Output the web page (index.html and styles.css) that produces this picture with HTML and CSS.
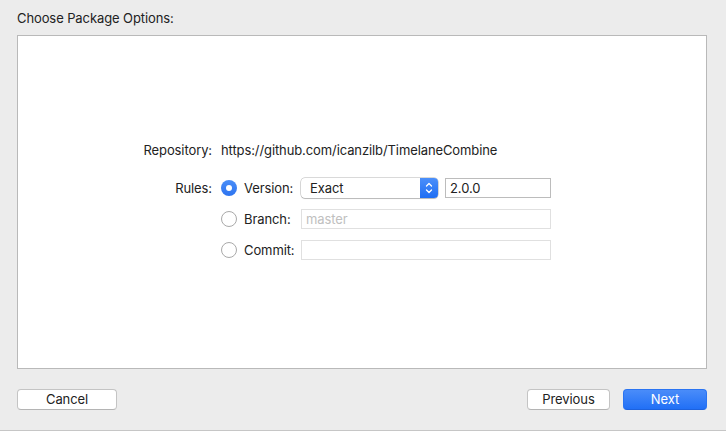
FILE: index.html
```html
<!DOCTYPE html>
<html>
<head>
<meta charset="utf-8">
<link rel="stylesheet" href="styles.css">
</head>
<body>
<div class="window">
  <div class="title">Choose Package Options:</div>
  <div class="panel">
    <div class="form">
      <div class="label repo-label">Repository:</div>
      <div class="repo-value">https://github.com/icanzilb/TimelaneCombine</div>
      <div class="label rules-label">Rules:</div>
      <div class="rules">
        <div class="rule">
          <span class="radio on"></span>
          <span class="rule-name">Version:</span>
          <div class="popup">
            <span class="popup-text">Exact</span>
            <span class="stepper">
              <svg width="18" height="20" viewBox="0 0 18 20"><path d="M6.5 8 L9 5.5 L11.5 8" fill="none" stroke="#fff" stroke-width="1.3" stroke-linecap="round" stroke-linejoin="round"/><path d="M6.5 12 L9 14.5 L11.5 12" fill="none" stroke="#fff" stroke-width="1.3" stroke-linecap="round" stroke-linejoin="round"/></svg>
            </span>
          </div>
          <div class="field small">2.0.0</div>
        </div>
        <div class="rule">
          <span class="radio"></span>
          <span class="rule-name">Branch:</span>
          <div class="field wide disabled"><span class="placeholder">master</span></div>
        </div>
        <div class="rule">
          <span class="radio"></span>
          <span class="rule-name">Commit:</span>
          <div class="field wide disabled"></div>
        </div>
      </div>
    </div>
  </div>
  <div class="buttons">
    <button class="btn cancel">Cancel</button>
    <div class="spacer"></div>
    <button class="btn prev">Previous</button>
    <button class="btn next">Next</button>
  </div>
</div>
</body>
</html>
```
FILE: styles.css
```css
html, body {
  margin: 0;
  padding: 0;
}
body {
  width: 726px;
  height: 431px;
  background: #ececec;
  font-family: Inter, "Liberation Sans", sans-serif;
  font-size: 13px;
  letter-spacing: -0.1px;
  color: #222;
  overflow: hidden;
}
.window {
  height: 430px;
  border-bottom: 1px solid #c6c6c6;
  padding: 0 19px 0 17px;
  display: flex;
  flex-direction: column;
}
.title {
  height: 35px;
  line-height: 16px;
  padding-top: 10px;
  box-sizing: border-box;
}
.panel {
  height: 334px;
  box-sizing: border-box;
  background: #fff;
  border: 1px solid #b9b9b9;
  padding-top: 106px;
}
.form {
  display: grid;
  grid-template-columns: 194px auto;
  column-gap: 9px;
  row-gap: 20px;
  align-items: start;
}
.label {
  text-align: right;
  line-height: 16px;
}
.rules-label {
  line-height: 20px;
}
.repo-value {
  line-height: 16px;
}
.rules {
  display: flex;
  flex-direction: column;
  gap: 11px;
}
.rule {
  display: flex;
  align-items: center;
  height: 20px;
}
.radio {
  width: 16px;
  height: 16px;
  box-sizing: border-box;
  border-radius: 50%;
  border: 1px solid #a9a9a9;
  background: #fff;
  margin-right: 7px;
  flex: none;
  position: relative;
}
.radio.on {
  border: none;
  background: linear-gradient(#4a8ef8, #2d74f0);
}
.radio.on::after {
  content: "";
  position: absolute;
  left: 5px;
  top: 5px;
  width: 6px;
  height: 6px;
  border-radius: 50%;
  background: #fff;
}
.rule-name {
  width: 50px;
  margin-right: 7px;
  flex: none;
}
.popup {
  width: 137px;
  height: 20px;
  box-sizing: border-box;
  border-radius: 4px;
  background: #fff;
  box-shadow: 0 0 0 0.5px rgba(0,0,0,0.3), 0 1px 1px rgba(0,0,0,0.15);
  display: flex;
  align-items: center;
  margin-right: 7px;
  flex: none;
}
.popup-text {
  flex: 1;
  padding-left: 9px;
}
.stepper {
  width: 18px;
  height: 20px;
  border-radius: 0 4px 4px 0;
  background: linear-gradient(#4b8ffa, #1f6ef3);
  display: block;
}
.stepper svg {
  display: block;
}
.field {
  height: 20px;
  box-sizing: border-box;
  border: 1px solid #bcbcbc;
  background: #fff;
  line-height: 18px;
  padding-left: 4px;
}
.field.small {
  width: 106px;
}
.field.wide {
  width: 250px;
}
.field.disabled {
  border-color: #e0e0e0;
}
.placeholder {
  color: #c0c0c0;
}
.buttons {
  display: flex;
  margin-top: 20px;
  height: 21px;
  gap: 13px;
}
.spacer {
  flex: 1;
}
.btn {
  font-family: inherit;
  font-size: 13px;
  letter-spacing: -0.1px;
  height: 21px;
  box-sizing: border-box;
  border-radius: 4px;
  border: 1px solid #c4c4c4;
  border-bottom-color: #b4b4b4;
  padding: 0;
  background: #fff;
  color: #222;
  line-height: 19px;
}
.cancel {
  width: 100px;
}
.prev {
  width: 83px;
}
.next {
  width: 84px;
  color: #fff;
  border: 1px solid #2a74f2;
  border-bottom-color: #1d62de;
  background: linear-gradient(#4a8cf9, #2170f6);
}
```
